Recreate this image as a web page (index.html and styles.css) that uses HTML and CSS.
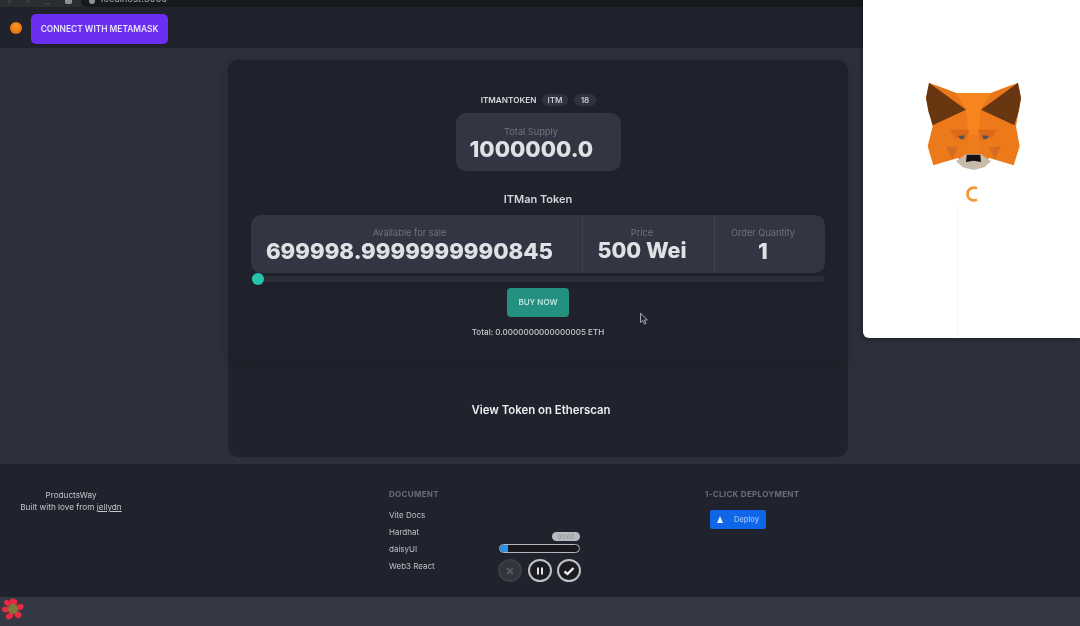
FILE: index.html
```html
<!DOCTYPE html>
<html lang="en">
<head>
<meta charset="utf-8">
<title>ITMan Token</title>
<link rel="stylesheet" href="styles.css">
</head>
<body>
<div class="page">
  <div class="chrome">
    <svg class="chrome-icons" width="81" height="7" viewBox="0 0 81 7"><path d="M11 0 8 3M27 0l3 3M44 3a5 5 0 0 0 6 0" fill="none" stroke="#45474d" stroke-width="1.2"/><path d="M65 0h7v2.5l-1 1.5h-5l-1-1.5z" fill="#8e8f93"/></svg>
    <div class="urlbar"><span class="url-dot"></span><span class="url">localhost:3000</span></div>
  </div>
  <nav class="nav">
    <span class="ball"></span>
    <button class="connect">CONNECT WITH METAMASK</button>
  </nav>
  <main class="main">
    <section class="card">
      <div class="panel">
        <div class="token-head">
          <span class="token-name">ITMANTOKEN</span>
          <span class="pill pill-sym">ITM</span>
          <span class="pill pill-dec">18</span>
        </div>
        <div class="supply">
          <div class="stat-title">Total Supply</div>
          <div class="stat-value">1000000.0</div>
        </div>
        <h2 class="title">ITMan Token</h2>
        <div class="stats">
          <div class="stat stat-a">
            <div class="stat-title">Available for sale</div>
            <div class="stat-value">699998.9999999990845</div>
          </div>
          <div class="stat stat-b">
            <div class="stat-title">Price</div>
            <div class="stat-value">500 Wei</div>
          </div>
          <div class="stat stat-c">
            <div class="stat-title">Order Quantity</div>
            <div class="stat-value">1</div>
          </div>
        </div>
        <div class="range"><span class="thumb"></span></div>
        <button class="buy">BUY NOW</button>
        <div class="total">Total: 0.0000000000000005 ETH</div>
      </div>
      <a class="etherscan">View Token on Etherscan</a>
    </section>
  </main>
  <footer class="footer">
    <div class="about">
      <div>ProductsWay</div>
      <div>Built with love from <u>jellydn</u></div>
    </div>
    <div class="links">
      <div class="foot-title">DOCUMENT</div>
      <a>Vite Docs</a>
      <a>Hardhat</a>
      <a>daisyUI</a>
      <a>Web3 React</a>
    </div>
    <div class="deploy-col">
      <div class="foot-title">1-CLICK DEPLOYMENT</div>
      <button class="deploy"><span class="tri"></span><span>Deploy</span></button>
    </div>
    <div class="recorder">
      <div class="timer">00:00</div>
      <div class="rec-bar"><span class="rec-fill"></span></div>
      <div class="rec-btns">
        <span class="rec-btn rec-off"><svg width="10" height="10" viewBox="0 0 10 10"><path d="M2 2l6 6M8 2 2 8" stroke="#55575c" stroke-width="2.2"/></svg></span>
        <span class="rec-btn"><svg width="10" height="10" viewBox="0 0 10 10"><path d="M3 1.5v7M7 1.5v7" stroke="#e4e4e4" stroke-width="2"/></svg></span>
        <span class="rec-btn"><svg width="12" height="10" viewBox="0 0 12 10"><path d="M1.5 5.5 4.5 8 10.5 2" fill="none" stroke="#eee" stroke-width="2.4"/></svg></span>
      </div>
    </div>
  </footer>
  <div class="bottom">
    <svg class="flower" width="22" height="22" viewBox="0 0 22 22">
      <g fill="#e62a42">
        <ellipse cx="11.5" cy="4" rx="4" ry="3.2" transform="rotate(20 11.5 4)"/>
        <ellipse cx="17.8" cy="9" rx="4" ry="3" transform="rotate(-20 17.8 9)"/>
        <ellipse cx="16" cy="16.8" rx="3.6" ry="3.2" transform="rotate(40 16 16.8)"/>
        <ellipse cx="7.5" cy="18" rx="3.8" ry="3" transform="rotate(-30 7.5 18)"/>
        <ellipse cx="3.8" cy="11.4" rx="3.8" ry="3"/>
        <ellipse cx="5.5" cy="5" rx="3.4" ry="2.8" transform="rotate(30 5.5 5)"/>
      </g>
      <circle cx="11" cy="11" r="5" fill="#7c7a3c"/>
    </svg>
  </div>

  <svg class="cursor" width="10" height="14" viewBox="0 0 10 14"><path d="M1.5 1v9.5l2.4-2 1.6 3.6 1.6-.7L5.4 8h3z" fill="#23262f" stroke="#a5a7ac" stroke-width="1"/></svg>

  <aside class="popup">
    <svg class="fox" width="105" height="95" viewBox="0 0 315 285">
      <polygon points="25,15 105,45 210,45 290,15 300,60 285,145 296,205 278,262 205,240 158,270 110,240 37,262 20,205 35,145 15,60" fill="#ec7a1a"/>
      <polygon points="105,45 210,45 180,95 172,170 143,170 135,95" fill="#f5851c"/>
      <polygon points="40,20 105,45 135,95" fill="#e8761b"/>
      <polygon points="275,20 210,45 180,95" fill="#e8761b"/>
      <polygon points="24,14 135,95 35,142 22,100 15,60" fill="#693612"/>
      <polygon points="291,14 180,95 280,142 293,100 300,60" fill="#693612"/>
      <polygon points="85,155 145,155 135,185 105,180" fill="#dc6a1a"/>
      <polygon points="230,155 170,155 180,185 210,180" fill="#dc6a1a"/>
      <polygon points="112,174 131,172 127,184 117,182" fill="#4c5260"/>
      <polygon points="203,174 184,172 188,184 198,182" fill="#4c5260"/>
      <polygon points="75,205 110,208 95,245" fill="#d56c22"/>
      <polygon points="240,205 205,208 220,245" fill="#d56c22"/>
      <polygon points="145,170 170,170 178,228 137,228" fill="#ee7d1c"/>
      <polygon points="105,250 135,228 180,228 210,250 190,268 158,276 125,268" fill="#c9bba9"/>
      <polygon points="137,230 178,230 180,252 158,248 135,252" fill="#14110f"/>
    </svg>
    <svg class="spin" width="16" height="18" viewBox="0 0 16 18"><path d="M13 3.4A6.4 6.4 0 1 0 13 14.6" fill="none" stroke="#f09a3a" stroke-width="2.7"/></svg>
    <div class="seam"></div>
  </aside>
</div>
</body>
</html>
```
FILE: styles.css
```css
* { box-sizing: border-box; }
html, body { margin: 0; padding: 0; }
body { font-family: Inter, "Liberation Sans", sans-serif; background: #2d303b; color: #e6e7ea; }
.page { position: relative; width: 1080px; height: 626px; overflow: hidden; display: flex; flex-direction: column; background: #2d303b; filter: blur(.5px); }

.chrome { height: 7px; background: #2c2d31; display: flex; flex: none; }
.chrome-icons { flex: none; display: block; }
.urlbar { flex: 1; background: #18191c; border-radius: 0 0 0 5px; display: flex; align-items: flex-end; padding-left: 8px; gap: 6px; overflow: hidden; }
.url-dot { width: 6px; height: 6px; border-radius: 50%; background: #8d8f93; margin-bottom: 3px; flex: none; }
.url { font-size: 9px; line-height: 9px; margin-bottom: 4px; color: #b4b6ba; letter-spacing: .2px; }

.nav { height: 41px; flex: none; background: #20232d; display: flex; align-items: center; padding: 0 0 0 10px; gap: 9px; }
.ball { width: 12px; height: 12px; border-radius: 50%; background: radial-gradient(circle at 50% 40%, #f79a1c, #e65d10); }
.connect { width: 137px; height: 30px; margin-top: 2px; border: 0; border-radius: 5px; background: #6a2ff2; color: #e8e2fb; font: 600 8.4px Inter, sans-serif; padding: 1px 0 0; }

.main { height: 416px; flex: none; padding-top: 12px; display: flex; justify-content: center; }
.card { width: 620px; height: 397px; border-radius: 11px; background: #20232d; display: flex; flex-direction: column; margin-left: -4px; }
.panel { height: 300px; border-radius: 11px 11px 10px 10px; background: #1f222c; box-shadow: 0 4px 10px rgba(20,22,28,.35); display: flex; flex-direction: column; align-items: center; padding-top: 33px; }
.token-head { height: 13px; display: flex; align-items: center; gap: 6px; margin-bottom: 7px; margin-left: 1px; font-size: 8.2px; font-weight: 600; }
.token-name { color: #d8d9dc; }
.pill { background: #2f3340; border-radius: 7px; height: 12px; line-height: 12px; color: #c4c6cb; }
.pill-sym { padding: 0 5px; }
.pill-dec { padding: 0 7px; }
.supply { width: 165px; height: 58px; border-radius: 10px; background: #323643; padding: 13px 0 0 14px; text-align: center; }
.supply .stat-title { padding-right: 28px; }
.stat-title { font-size: 9.2px; line-height: 11px; color: #6f7380; }
.stat-value { font-size: 22.2px; line-height: 26px; font-weight: 800; color: #dfe1e5; white-space: nowrap; text-align: left; }
.supply .stat-value { line-height: 24px; }
.title { margin: 20px 0 8px; font-size: 11px; line-height: 16px; font-weight: 600; color: #d4d5d9; }
.stats { width: 574px; height: 58px; border-radius: 10px; background: #323643; display: flex; }
.stat { padding-top: 12px; text-align: center; border-right: 1px solid #3d4150; }
.stat .stat-value { text-align: center; line-height: 25px; }
.stat-a { width: 332px; padding-right: 14px; }
.stat-b { width: 132px; padding-right: 13px; }
.stat-b .stat-value { font-size: 21.5px; }
.stat-c { width: 110px; border-right: 0; padding-right: 14px; }
.range { width: 574px; height: 6px; border-radius: 3px; background: #2b2e36; margin-top: 3px; position: relative; }
.thumb { position: absolute; left: 1px; top: -3px; width: 12px; height: 12px; border-radius: 50%; background: #26c4ad; }
.buy { width: 62px; height: 29px; margin-top: 6px; border: 0; border-radius: 4px; background: #24907f; color: #b9e6de; font: 600 8px Inter, sans-serif; padding: 0 0 2px; }
.total { margin-top: 10px; font-size: 8.1px; line-height: 10px; font-weight: 500; color: #c9cacd; }
.etherscan { display: block; margin-top: 42px; padding-left: 6px; text-align: center; font-size: 11.4px; line-height: 16px; font-weight: 600; color: #eceded; }

.footer { height: 133px; flex: none; background: #20232d; display: grid; grid-template-columns: 369px 316px 1fr; padding: 25px 0 0 20px; position: relative; font-size: 8px; color: #c4c5c9; align-items: start; }
.about { width: 102px; text-align: center; line-height: 12px; font-size: 8.2px; white-space: nowrap; }
.foot-title { font-size: 8px; line-height: 10px; font-weight: 700; letter-spacing: .3px; color: #6b6e78; margin-bottom: 8px; }
.deploy-col .foot-title { margin-bottom: 11px; }
.links { display: flex; flex-direction: column; }
.links a { font-size: 8px; line-height: 17px; color: #bfc0c5; }
.deploy { display: flex; align-items: center; width: 56px; height: 19px; margin-left: 5px; padding: 0 0 0 7px; gap: 11px; border: 0; border-radius: 2px; background: #0f66e8; color: #9cc2f6; font: 500 7.5px Inter, sans-serif; }
.tri { width: 0; height: 0; border-left: 3.5px solid transparent; border-right: 3.5px solid transparent; border-bottom: 7px solid #e8eefb; flex: none; }

.recorder { position: absolute; left: 498px; top: 68px; width: 83px; display: flex; flex-direction: column; align-items: flex-end; }
.timer { width: 28px; height: 9px; border-radius: 5px; background: #b9babd; color: #8a8b8f; font-size: 6px; line-height: 9px; text-align: center; margin-right: 1px; }
.rec-bar { width: 81px; height: 9px; margin: 3px 1px 0 0; border: 1.5px solid #b5b6ba; border-radius: 5px; background: #16181e; overflow: hidden; }
.rec-fill { display: block; width: 8px; height: 100%; background: #2c8fe8; }
.rec-btns { width: 83px; display: flex; justify-content: space-between; margin-top: 6px; }
.rec-btn { width: 24px; height: 23px; border-radius: 50%; border: 2px solid #c0c1c4; background: #1a1c21; display: flex; align-items: center; justify-content: center; }
.rec-off { border-color: #3c3e45; background: #33353c; }

.bottom { flex: 1; background: #343845; display: flex; align-items: flex-start; padding: 0 0 0 2px; }
.flower { margin-top: 1px; }

.cursor { position: absolute; left: 639px; top: 312px; }

.popup { position: absolute; left: 863px; top: 0; width: 217px; height: 338px; background: #fff; border-radius: 0 0 0 6px; box-shadow: -1px 1px 4px rgba(10,12,16,.55); display: flex; flex-direction: column; align-items: center; }
.fox { margin-top: 78px; margin-left: 3px; flex: none; }
.spin { margin-top: 12px; flex: none; }
.seam { position: absolute; left: 94px; top: 205px; width: 1px; height: 133px; background: #f5f6fa; }
```
